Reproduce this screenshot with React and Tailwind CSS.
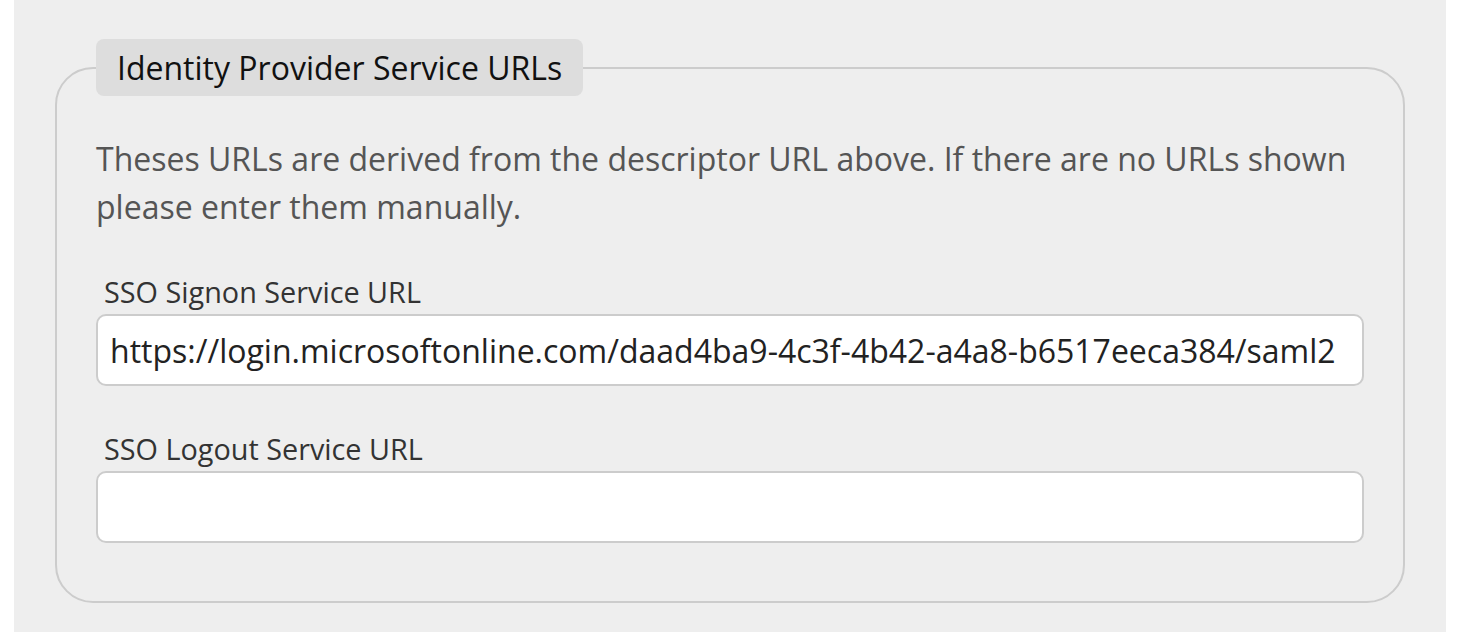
import React, { useState } from 'react';

const Field = ({ label, value, onChange }) => (
    <div className="mt-[45px] first:mt-0">
        <label className="block pl-2 text-[28.8px] leading-[36px] text-[#333333]">{label}</label>
        <input
            type="text"
            value={value}
            onChange={onChange}
            className="mt-[4px] w-full h-[72px] bg-white border-2 border-[#cccccc] rounded-[10px] px-[12px] text-[32px] text-[#222222] focus:outline-none"
        />
    </div>
);

const App = () => {
    const [signon, setSignon] = useState('https://login.microsoftonline.com/daad4ba9-4c3f-4b42-a4a8-b6517eeca384/saml2');
    const [logout, setLogout] = useState('');

    return (
        <div className="min-h-screen bg-white" style={{ fontFamily: '"Open Sans", "Noto Sans", sans-serif' }}>
            <div className="ml-[14px] w-[1432px] h-[632px] bg-[#eeeeee] pt-[39px]">
                <fieldset className="ml-[41px] w-[1350px] border-2 border-[#cccccc] rounded-[38px] pl-[39px] pr-[39px] pb-[58px]">
                    <legend className="bg-[#dddddd] rounded-[8px] px-[21px] h-[57px] text-[32px] leading-[57px] text-[#111111]">
                        Identity Provider Service URLs
                    </legend>
                    <p className="mt-[39px] text-[32px] leading-[48px] text-[#555555]">
                        Theses URLs are derived from the descriptor URL above. If there are no URLs shown please enter them manually.
                    </p>
                    <div className="mt-[43px]">
                        <Field label="SSO Signon Service URL" value={signon} onChange={(e) => setSignon(e.target.value)} />
                        <Field label="SSO Logout Service URL" value={logout} onChange={(e) => setLogout(e.target.value)} />
                    </div>
                </fieldset>
            </div>
        </div>
    );
};

export default App;
